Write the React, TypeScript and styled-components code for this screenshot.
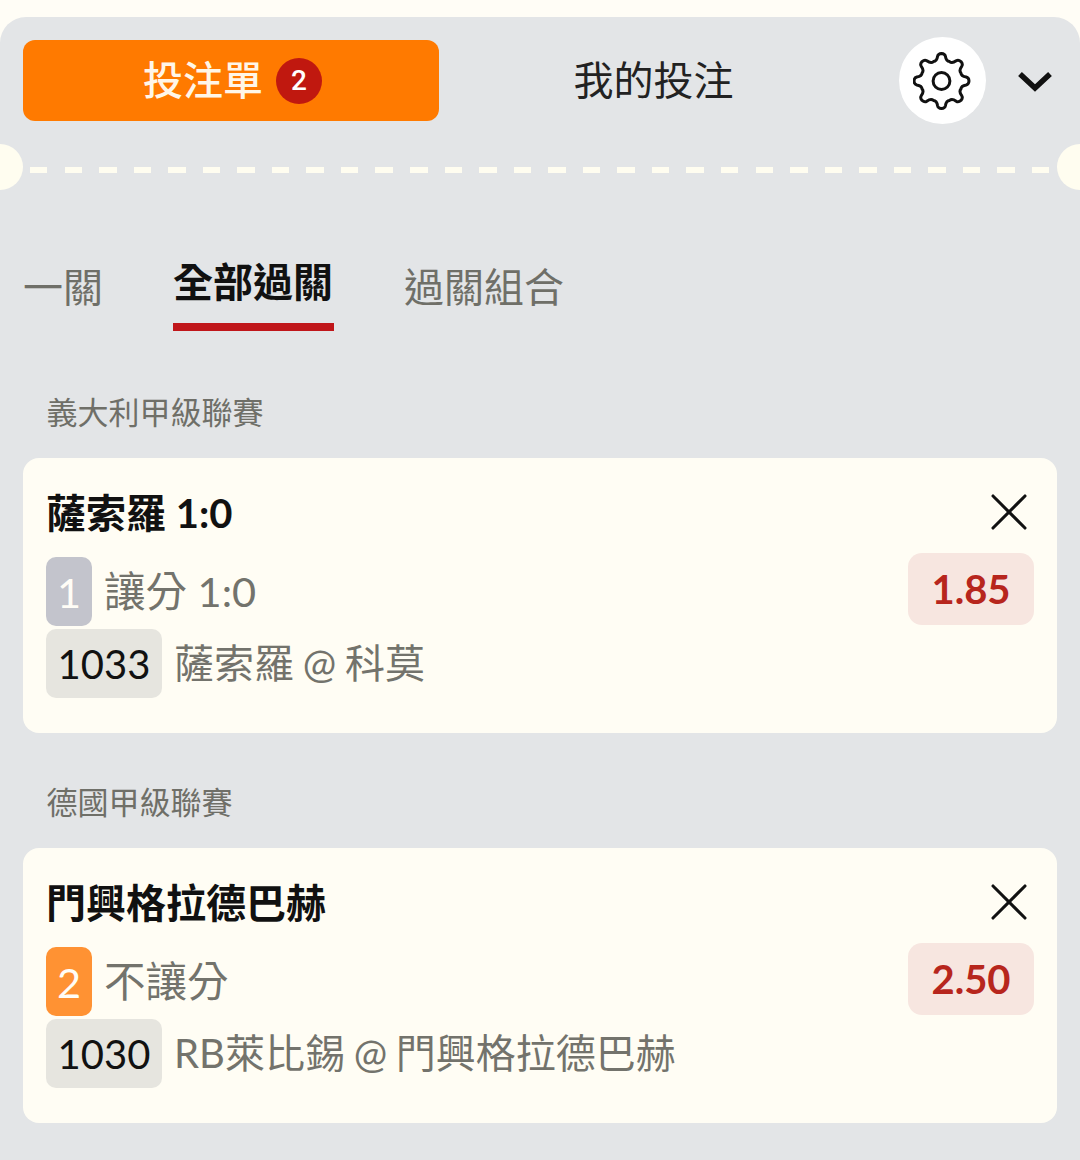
import React from "react";
import styled, { createGlobalStyle } from "styled-components";
import { X } from "lucide-react";

const Global = createGlobalStyle`
  html, body { margin: 0; padding: 0; background: #fffdf6; }
  body { font-family: Lato, "Noto Sans CJK TC", sans-serif; }
`;

const Page = styled.div`
  width: 1080px;
  height: 1160px;
  padding-top: 17px;
  box-sizing: border-box;
  overflow: hidden;
  background: #fffdf6;
`;
const Panel = styled.div`
  height: 1143px;
  background: #e3e5e7;
  border-radius: 26px 26px 0 0;
  overflow: hidden;
`;
const Header = styled.div`
  display: flex;
  align-items: center;
  padding: 20px 27px 0 23px;
  height: 87px;
`;
const ActiveTab = styled.div`
  width: 416px;
  height: 81px;
  border-radius: 12px;
  background: #ff7a00;
  color: #fff6e8;
  display: flex;
  align-items: center;
  justify-content: center;
  gap: 13px;
  padding-left: 3px;
  box-sizing: border-box;
  font-size: 40px;
  font-weight: 500;
`;
const ActiveLabel = styled.span`
  padding-bottom: 6px;
`;
const Count = styled.span`
  width: 46px;
  height: 46px;
  border-radius: 50%;
  background: #c0180f;
  color: #fff;
  display: flex;
  align-items: center;
  justify-content: center;
  font-family: Roboto, sans-serif;
  font-size: 28px;
  font-weight: 500;
`;
const PlainTab = styled.div`
  width: 429px;
  text-align: center;
  font-size: 40px;
  color: #222;
  padding-bottom: 6px;
`;
const GearButton = styled.div`
  width: 87px;
  height: 87px;
  margin-left: 31px;
  border-radius: 50%;
  background: #fff;
  display: flex;
  align-items: center;
  justify-content: center;
`;
const Chevron = styled.svg`
  margin-left: 31px;
  width: 36px;
  height: 24px;
`;
const Divider = styled.div`
  position: relative;
  height: 46px;
  margin-top: 20px;
`;
const Dashes = styled.div`
  position: absolute;
  left: 30px;
  right: 29px;
  top: 23px;
  height: 6px;
  background: repeating-linear-gradient(90deg, #fffdf0 0 17.5px, transparent 17.5px 34.55px);
`;
const Notch = styled.div<{ $side: "left" | "right" }>`
  position: absolute;
  top: 0;
  ${(p) => p.$side}: -23px;
  width: 46px;
  height: 46px;
  border-radius: 50%;
  background: #fffdf0;
`;
const Tabs = styled.div`
  display: flex;
  align-items: flex-start;
  margin-top: 63px;
  padding-left: 23px;
  gap: 70px;
  height: 136px;
`;
const Tab = styled.div`
  font-size: 40px;
  line-height: 58px;
  color: #6f6f68;
  margin-top: 5px;
`;
const SelectedTab = styled.div`
  font-size: 40px;
  line-height: 58px;
  font-weight: 700;
  color: #111;
  height: 78px;
  box-sizing: border-box;
  padding-right: 1px;
  border-bottom: 8px solid #c0161a;
`;
const League = styled.div`
  margin-left: 46.5px;
  height: 46px;
  line-height: 46px;
  font-size: 31px;
  color: #6f6f68;
`;
const Card = styled.div`
  margin: 23px 23px 46px;
  height: 275px;
  box-sizing: border-box;
  background: #fffdf4;
  border-radius: 16px;
  padding: 30px 23px 0;
  display: grid;
  grid-template-columns: 1fr auto;
`;
const Info = styled.div`
  display: flex;
  flex-direction: column;
`;
const Title = styled.div`
  font-size: 40px;
  font-weight: 700;
  line-height: 50px;
  color: #111;
  margin-bottom: 19px;
`;
const Line = styled.div`
  display: flex;
  align-items: center;
  gap: 12px;
  font-size: 41.5px;
  color: #73736c;
  height: 69px;
`;
const BetLine = styled(Line)`
  margin-top: 3px;
  font-size: 40px;
  word-spacing: -1.5px;
`;
const LineText = styled.span`
  padding-bottom: 5px;
`;
const Rank = styled.span<{ $orange?: boolean }>`
  width: 46px;
  height: 69px;
  border-radius: 10px;
  background: ${(p) => (p.$orange ? "#ff9233" : "#c3c4cc")};
  color: #fffdf6;
  display: flex;
  align-items: center;
  justify-content: center;
`;
const Code = styled.span`
  width: 116px;
  height: 69px;
  border-radius: 10px;
  background: #e6e5df;
  color: #111;
  display: flex;
  align-items: center;
  justify-content: center;
`;
const Side = styled.div`
  display: flex;
  flex-direction: column;
  align-items: flex-end;
`;
const Close = styled.div`
  width: 50px;
  height: 50px;
  margin-top: -1px;
  display: flex;
  align-items: center;
  justify-content: center;
  color: #111;
`;
const CloseIcon = styled(X)`
  flex-shrink: 0;
`;
const Odds = styled.div`
  margin-top: 16px;
  width: 126px;
  height: 72px;
  border-radius: 14px;
  background: #f7e6e0;
  color: #b7261d;
  font-size: 40px;
  font-weight: 700;
  display: flex;
  align-items: center;
  justify-content: center;
`;

function gearPath(R: number, r: number, cx: number, cy: number) {
  const pt = (deg: number, rad: number) => {
    const a = ((deg - 90) * Math.PI) / 180;
    return `${(cx + rad * Math.cos(a)).toFixed(2)} ${(cy + rad * Math.sin(a)).toFixed(2)}`;
  };
  let d = `M${pt(-22.5, r)}`;
  for (let i = 0; i < 8; i++) {
    const a = i * 45;
    d += ` C${pt(a - 16, r - 0.6)} ${pt(a - 12, r + 0.5)} ${pt(a - 9, R - 2.5)}`;
    d += ` Q${pt(a - 7, R)} ${pt(a, R)}`;
    d += ` Q${pt(a + 7, R)} ${pt(a + 9, R - 2.5)}`;
    d += ` C${pt(a + 12, r + 0.5)} ${pt(a + 16, r - 0.6)} ${pt(a + 22.5, r)}`;
  }
  return d + "Z";
}

const bets = [
  { league: "義大利甲級聯賽", title: "薩索羅 1:0", rank: "1", market: "讓分 1:0", code: "1033", match: "薩索羅 @ 科莫", odds: "1.85" },
  { league: "德國甲級聯賽", title: "門興格拉德巴赫", rank: "2", market: "不讓分", code: "1030", match: "RB萊比錫 @ 門興格拉德巴赫", odds: "2.50", orange: true },
];

export default function App() {
  return (
    <Page>
      <Global />
      <Panel>
        <Header>
          <ActiveTab><ActiveLabel>投注單</ActiveLabel><Count>2</Count></ActiveTab>
          <PlainTab>我的投注</PlainTab>
          <GearButton>
            <svg width="60" height="60" viewBox="0 0 60 60" fill="none" stroke="#111" strokeWidth="3" strokeLinejoin="round">
              <path d={gearPath(27.5, 21, 28.5, 30)} />
              <circle cx="28.5" cy="30" r="8.4" />
            </svg>
          </GearButton>
          <Chevron viewBox="0 0 36 24">
            <path d="M3 5 L18 19 L33 5" fill="none" stroke="#111" strokeWidth="5.5" />
          </Chevron>
        </Header>
        <Divider>
          <Notch $side="left" />
          <Dashes />
          <Notch $side="right" />
        </Divider>
        <Tabs>
          <Tab>一關</Tab>
          <SelectedTab>全部過關</SelectedTab>
          <Tab>過關組合</Tab>
        </Tabs>
        {bets.map((b) => (
          <React.Fragment key={b.code}>
            <League>{b.league}</League>
            <Card>
              <Info>
                <Title>{b.title}</Title>
                <Line><Rank $orange={b.orange}>{b.rank}</Rank><LineText>{b.market}</LineText></Line>
                <BetLine><Code>{b.code}</Code><LineText>{b.match}</LineText></BetLine>
              </Info>
              <Side>
                <Close><CloseIcon size={64} strokeWidth={1.15} /></Close>
                <Odds>{b.odds}</Odds>
              </Side>
            </Card>
          </React.Fragment>
        ))}
      </Panel>
    </Page>
  );
}
